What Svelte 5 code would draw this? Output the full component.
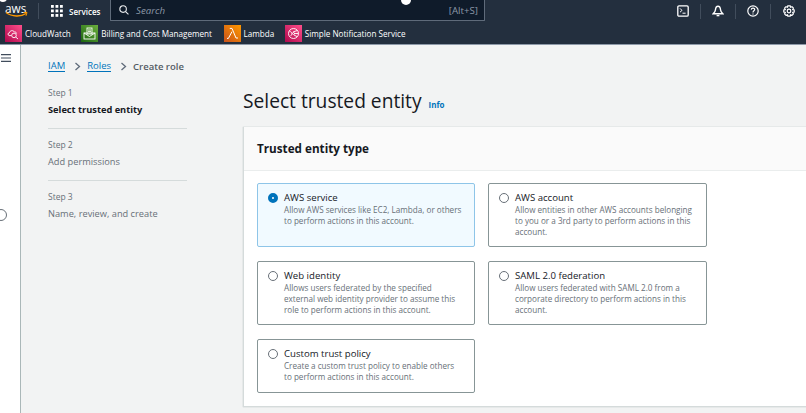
<script>
  const steps = [
    { n: 'Step 1', t: 'Select trusted entity', on: true },
    { n: 'Step 2', t: 'Add permissions' },
    { n: 'Step 3', t: 'Name, review, and create' }
  ];
  const tiles = [
    { t: 'AWS service', d: 'Allow AWS services like EC2, Lambda, or others\nto perform actions in this account.', on: true, h: 64 },
    { t: 'AWS account', d: 'Allow entities in other AWS accounts belonging\nto you or a 3rd party to perform actions in this\naccount.', h: 64 },
    { t: 'Web identity', d: 'Allows users federated by the specified\nexternal web identity provider to assume this\nrole to perform actions in this account.', h: 64 },
    { t: 'SAML 2.0 federation', d: 'Allow users federated with SAML 2.0 from a\ncorporate directory to perform actions in this\naccount.', h: 64 },
    { t: 'Custom trust policy', d: 'Create a custom trust policy to enable others\nto perform actions in this account.', h: 54 }
  ];
</script>

<div class="page">
  <span class="dot d1"></span>
  <span class="dot d2"></span>
  <header class="top">
    <div class="logo">
      <span class="aws">aws</span>
      <svg class="smile" width="23" height="7" viewBox="0 0 23 7"><path d="M1 1.5C7 6 16 6 21 2.5" fill="none" stroke="#f90" stroke-width="1.4"/><path d="M18.5 1.5L22 1.5L21 4.8" fill="none" stroke="#f90" stroke-width="1"/></svg>
    </div>
    <span class="vsep"></span>
    <svg class="grid-ic" width="12" height="12" viewBox="0 0 12 12" fill="#fff">
      {#each [0, 4.5, 9] as y}{#each [0, 4.5, 9] as x}<rect x={x} y={y} width="2.8" height="2.8"/>{/each}{/each}
    </svg>
    <span class="services">Services</span>
    <div class="search">
      <svg width="10" height="10" viewBox="0 0 11 11" fill="none" stroke="#e9ebed" stroke-width="1.2"><circle cx="4.5" cy="4.5" r="3.6"/><path d="M7.2 7.2L10.4 10.4"/></svg>
      <span class="ph">Search</span>
      <span class="kbd">[Alt+S]</span>
    </div>
    <div class="tools">
      <span class="tool">
        <svg width="12" height="12" viewBox="0 0 12 12" fill="none" stroke="#fff"><rect x=".8" y=".8" width="10.4" height="10.4" rx="1.2" stroke-width="1.3"/><path d="M3 3.4L5 5.4L3 7.2" stroke-width="1"/><path d="M5.5 8.2H8.6" stroke-width="1"/></svg>
      </span>
      <span class="tool">
        <svg width="12" height="12" viewBox="0 0 12 12" fill="none" stroke="#fff" stroke-width="1.4"><path d="M6 1.2C4 1.2 3.6 3 3.4 5C3.3 6.6 2.4 7.6 1.2 8.8H10.8C9.6 7.6 8.7 6.6 8.6 5C8.4 3 8 1.2 6 1.2Z"/><path d="M4.6 10.6H7.4"/></svg>
      </span>
      <span class="tool">
        <svg width="12" height="12" viewBox="0 0 12 12" fill="none" stroke="#fff" stroke-width="1.2"><circle cx="6" cy="6" r="5.2"/><path d="M4.3 4.6C4.4 2.5 7.8 2.7 7.7 4.6C7.7 5.8 6 5.8 6 7.4"/><path d="M6 8.4V9.4"/></svg>
      </span>
      <span class="tool last">
        <svg width="12" height="12" viewBox="0 0 12 12" fill="none" stroke="#fff" stroke-width="1.2"><path d="M4.8.8H7.2L7.6 2.2L9 1.7L10.4 3.2L9.7 4.6L11.2 5V7L9.7 7.4L10.4 8.8L9 10.3L7.6 9.8L7.2 11.2H4.8L4.4 9.8L3 10.3L1.6 8.8L2.3 7.4L.8 7V5L2.3 4.6L1.6 3.2L3 1.7L4.4 2.2Z"/><circle cx="6" cy="6" r="1.8"/></svg>
      </span>
    </div>
  </header>

  <nav class="favs">
    <span class="fav">
      <svg class="sq pink" viewBox="0 0 17 17" fill="none" stroke="#fff" stroke-width=".9"><path d="M4 10.5C2.5 10 2.8 7.8 4.4 7.8C4.8 5.4 8.2 4.8 9.4 7C10.8 6.8 11.6 7.6 11.6 8.6"/><circle cx="9" cy="10.4" r="2.3"/><path d="M10.7 12L13 14"/><path d="M4 10.6H6.4"/></svg>
      CloudWatch
    </span>
    <span class="fav">
      <svg class="sq green" viewBox="0 0 17 17" fill="none" stroke="#fff" stroke-width=".9"><rect x="3" y="8" width="11" height="6"/><path d="M3 8L8.5 11.5L14 8"/><rect x="6" y="3" width="5" height="6"/><path d="M7 5H10M7 6.6H10"/></svg>
      Billing and Cost Management
    </span>
    <span class="fav">
      <svg class="sq orange" viewBox="0 0 17 17" fill="none" stroke="#fff" stroke-width="1"><path d="M5.8 3.4H8L12 13H14M8 6.6L4.4 13.4H3"/></svg>
      Lambda
    </span>
    <span class="fav">
      <svg class="sq rose" viewBox="0 0 17 17" fill="none" stroke="#fff" stroke-width=".9"><circle cx="8.5" cy="8.5" r="5"/><path d="M4.5 6.6C7 6.4 7.6 9 5.6 11M8 7L12 5.6M9 8.5L13.4 8.5M9 10L12 11.6"/><circle cx="8.5" cy="8.5" r="1"/></svg>
      Simple Notification Service
    </span>
  </nav>

  <div class="body">
    <aside class="rail">
      <svg width="10" height="8" viewBox="0 0 10 8" stroke="#414d5c" stroke-width="1.1"><path d="M0 .6H10M0 4H10M0 7.4H10"/></svg>
      <span class="ring"></span>
    </aside>

    <main class="content">
      <div class="crumbs">
        <a href="#iam">IAM</a>
        <svg width="7" height="9" viewBox="0 0 7 9" fill="none" stroke="#5f6b7a" stroke-width="1.3"><path d="M1.5 1L5.5 4.5L1.5 8"/></svg>
        <a href="#roles">Roles</a>
        <svg width="7" height="9" viewBox="0 0 7 9" fill="none" stroke="#5f6b7a" stroke-width="1.3"><path d="M1.5 1L5.5 4.5L1.5 8"/></svg>
        <span class="cur">Create role</span>
      </div>

      <div class="columns">
        <ol class="steps">
          {#each steps as s}
            <li class="step">
              <small>{s.n}</small>
              <span class:on={s.on}>{s.t}</span>
            </li>
          {/each}
        </ol>

        <section class="main">
          <h1>Select trusted entity <a href="#info">Info</a></h1>
          <div class="card">
            <h2>Trusted entity type</h2>
            <div class="tiles">
              {#each tiles as x}
                <div class="tile" class:sel={x.on} style="height:{x.h}px">
                  <span class="radio" class:chk={x.on}></span>
                  <div class="txt">
                    <div class="tt">{x.t}</div>
                    <div class="dd">{x.d}</div>
                  </div>
                </div>
              {/each}
            </div>
          </div>
        </section>
      </div>
    </main>
  </div>
</div>

<style>
  :global(body) { margin: 0; background: #f2f3f3; }
  .page { position: relative; width: 806px; height: 413px; overflow: hidden; font-family: "Open Sans", "Noto Sans", sans-serif; color: #16191f; }
  .dot { position: absolute; border-radius: 50%; background: #fff; z-index: 3; }
  .d1 { left: -1px; top: -6px; width: 8px; height: 8px; }
  .d2 { left: 401px; top: -5px; width: 10px; height: 10px; }

  .top { height: 22px; background: #232f3e; display: flex; align-items: center; color: #fff; }
  .logo { position: relative; width: 38px; height: 22px; flex: none; }
  .aws { position: absolute; left: 5px; top: 1px; font-size: 11.8px; line-height: 14px; font-weight: 500; }
  .smile { position: absolute; left: 5px; top: 11px; }
  .vsep { width: 1px; height: 16px; background: #414d5c; flex: none; }
  .grid-ic { margin-left: 12px; flex: none; }
  .services { margin-left: 6px; font-size: 8px; font-weight: 600; width: 41px; }
  .search { margin-top: -1px; width: 375px; height: 21px; box-sizing: border-box; background: #0f1b2a; border: 1px solid #5f6b7a; border-top: 0; border-radius: 0 0 1px 1px; display: flex; align-items: center; padding: 0 6px 0 8px; flex: none; }
  .ph { margin-left: 7px; font-size: 9.7px; font-style: italic; color: #8d99a8; flex: 1; }
  .kbd { font-size: 9.7px; color: #8d99a8; }
  .tools { margin-left: auto; display: flex; align-items: center; }
  .tool { width: 35px; height: 15px; display: flex; justify-content: center; align-items: center; border-right: 1px solid #414d5c; box-sizing: border-box; }
  .tool.last { border-right: 0; }

  .favs { height: 22px; background: #232f3e; border-bottom: 1px solid #8d99a8; display: flex; align-items: center; padding-left: 5px; color: #fff; font-size: 8.15px; font-weight: 500; white-space: nowrap; }
  .fav { display: flex; align-items: center; gap: 3px; margin-right: 10.5px; }
  .fav:nth-child(2) { margin-right: 11.5px; }
  .sq { width: 17px; height: 17px; flex: none; }
  .pink { background: linear-gradient(45deg, #b0084d, #ff4f8b); }
  .green { background: linear-gradient(45deg, #1b660f, #6cae3e); }
  .orange { background: linear-gradient(45deg, #c8511b, #f90); }
  .rose { background: linear-gradient(45deg, #b0084d, #ff4f8b); }

  .body { display: flex; height: 368px; }
  .rail { position: relative; width: 21px; flex: none; box-sizing: border-box; background: #fff; border-right: 1px solid #aab7b8; padding: 9px 0 0 1px; }
  .rail svg { display: block; }
  .ring { position: absolute; left: -5px; top: 164px; width: 10px; height: 10px; border: 1px solid #687078; border-radius: 50%; background: #fff; }

  .content { flex: 1; padding-left: 27px; min-width: 0; }
  .crumbs { height: 42px; display: flex; align-items: center; font-size: 9.5px; }
  .crumbs a { color: #0073bb; text-decoration: none; border-bottom: 1px solid #0073bb; line-height: 11px; }
  .crumbs svg { margin: 0 6px 0 9px; }
  .cur { color: #545b64; font-weight: 600; }

  .columns { display: flex; margin-top: 2px; }
  .steps { list-style: none; margin: -2px 56px 0 0; padding: 0; width: 139px; flex: none; }
  .step { height: 52px; box-sizing: border-box; padding-top: 10px; display: flex; flex-direction: column; gap: 5px; border-bottom: 1px solid #d5dbdb; }
  .step:first-child { height: 42px; padding-top: 0; }
  .step:last-child { border-bottom: 0; }
  .step small { font-size: 8.5px; line-height: 11px; color: #687078; }
  .step span { font-size: 9.25px; line-height: 13px; color: #687078; }
  .step span.on { color: #16191f; font-weight: 700; }

  .main { flex: 1; min-width: 0; }
  h1 { margin: -1px 0 0; height: 39px; box-sizing: border-box; font-size: 19.2px; line-height: 26px; font-weight: 400; color: #16191f; }
  h1 a { font-size: 8px; font-weight: 700; color: #0073bb; text-decoration: none; margin-left: 2px; }
  .card { background: #fff; box-shadow: 0 0 1px #aab7b8; border-left: 1px solid #d5dbdb; height: 280px; box-sizing: border-box; border-bottom: 1px solid #d5dbdb; }
  h2 { margin: 0; height: 44px; box-sizing: border-box; background: #fafafa; border-bottom: 1px solid #eaeded; padding: 13px 0 0 13px; font-size: 11.7px; line-height: 16px; font-weight: 700; }
  .tiles { display: grid; grid-template-columns: 217.5px 218.5px; column-gap: 13.5px; row-gap: 14px; padding: 12px 0 0 13px; align-items: start; }
  .tile { box-sizing: border-box; border: 1px solid #879596; border-radius: 2px; background: #fff; padding: 7px 0 0 10px; display: flex; }
  .tile.sel { background: #f1faff; border-color: #8ec5e8; }
  .radio { width: 8px; height: 8px; border: 1px solid #687078; border-radius: 50%; flex: none; margin-top: 2px; background: #fff; }
  .radio.chk { width: 2px; height: 2px; border: 4px solid #0073bb; }
  .txt { margin-left: 6px; }
  .tt { font-size: 9.6px; line-height: 13px; color: #16191f; }
  .dd { font-size: 8.15px; line-height: 11px; color: #687078; white-space: pre; }
</style>
